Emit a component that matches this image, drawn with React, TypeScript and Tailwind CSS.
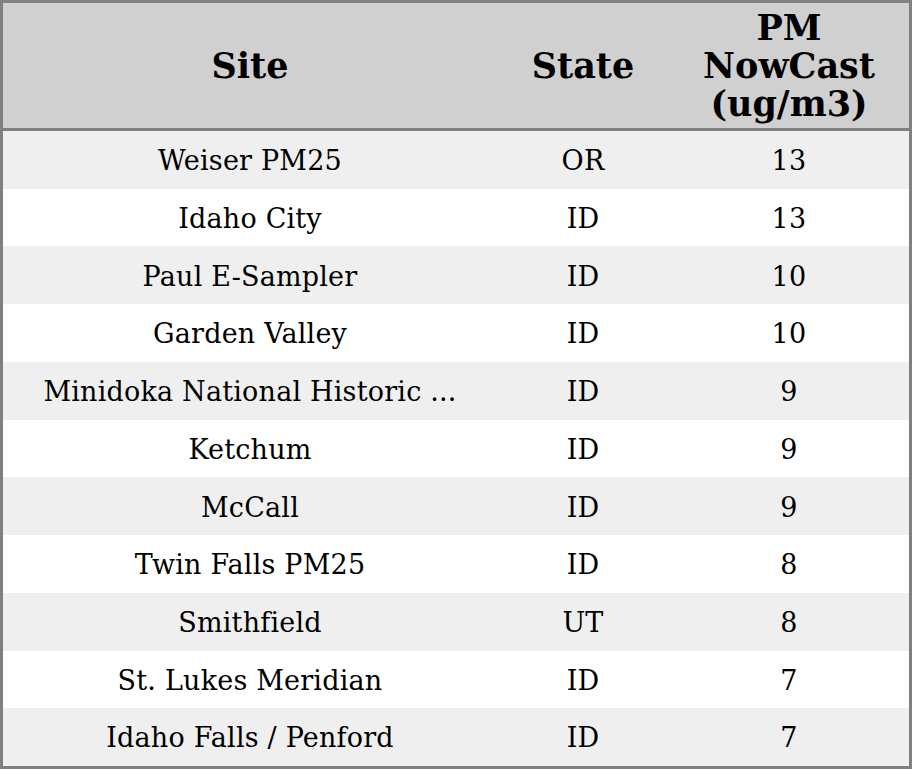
// PM NowCast のサイト一覧テーブル
const rows: [string, string, string][] = [
  ["Weiser PM25", "OR", "13"],
  ["Idaho City", "ID", "13"],
  ["Paul E-Sampler", "ID", "10"],
  ["Garden Valley", "ID", "10"],
  ["Minidoka National Historic ...", "ID", "9"],
  ["Ketchum", "ID", "9"],
  ["McCall", "ID", "9"],
  ["Twin Falls PM25", "ID", "8"],
  ["Smithfield", "UT", "8"],
  ["St. Lukes Meridian", "ID", "7"],
  ["Idaho Falls / Penford", "ID", "7"],
];

const App = () => {
  return (
    <div
      className="w-[912px] h-[769px] flex flex-col border-[3px] border-[#808080] bg-white text-black"
      style={{ fontFamily: '"DejaVu Serif", "Liberation Serif", serif' }}
    >
      {/* ヘッダー */}
      <div className="h-[128px] shrink-0 grid grid-cols-[494px_172px_240px] items-center bg-[#d0d0d0] border-b-[3px] border-[#808080] text-[35px] font-bold text-center leading-[38px]">
        <div>Site</div>
        <div>State</div>
        <div>
          PM
          <br />
          NowCast
          <br />
          (ug/m3)
        </div>
      </div>

      {/* 本文 */}
      <div className="flex-1 flex flex-col">
        {rows.map(([site, state, pm], i) => (
          <div
            key={site}
            className={`flex-1 grid grid-cols-[494px_172px_240px] items-center pt-[3px] text-center text-[27px] tracking-[0.2px] ${
              i % 2 === 0 ? "bg-[#efefef]" : "bg-white"
            }`}
          >
            <div>{site}</div>
            <div>{state}</div>
            <div>{pm}</div>
          </div>
        ))}
      </div>
    </div>
  );
};

export default App;
